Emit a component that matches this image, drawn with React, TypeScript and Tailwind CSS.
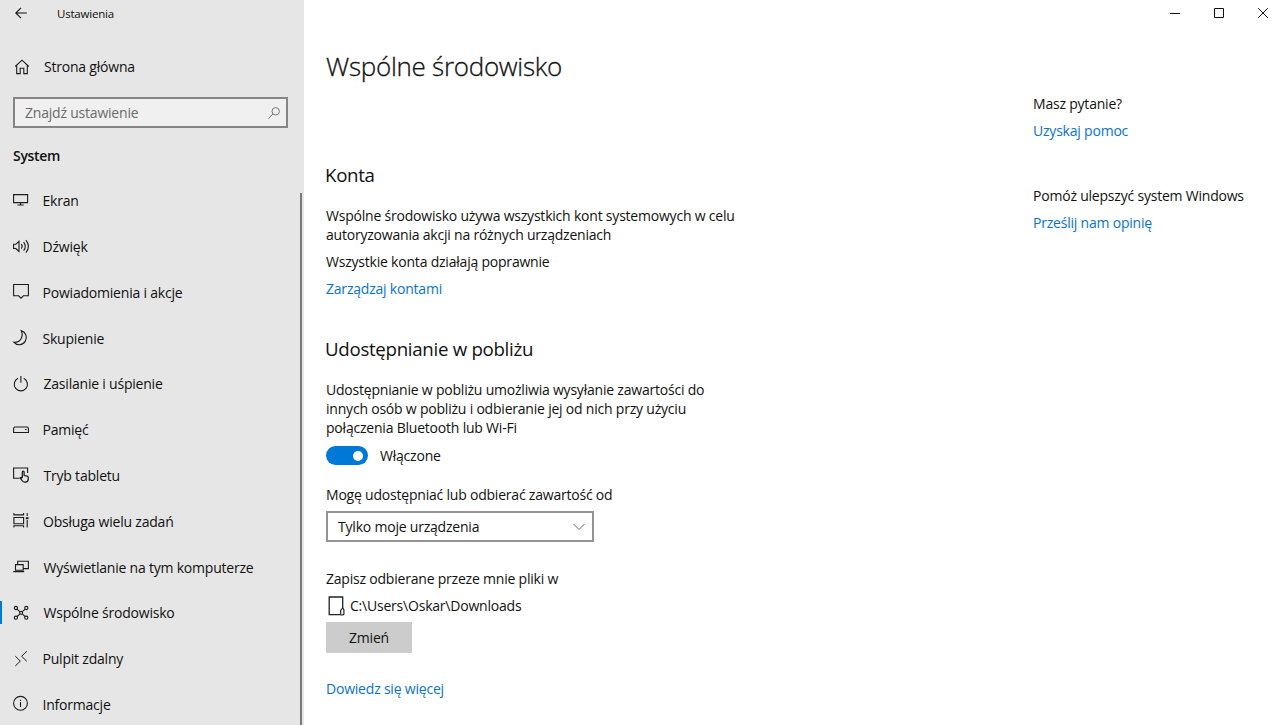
import type { ReactNode } from "react";

interface NavItem {
  label: string;
  text: string;
  icon: ReactNode;
  active?: boolean;
}

function Glyph({ children }: { children: ReactNode }) {
  return (
    <svg
      viewBox="0 0 16 16"
      className="h-4 w-4 shrink-0 overflow-visible"
      fill="none"
      stroke="#1c1c1c"
      strokeWidth="1.1"
    >
      {children}
    </svg>
  );
}

const navItems: NavItem[] = [
  {
    label: "Ekran",
    text: "pl-[13.5px]",
    icon: (
      <Glyph>
        <path d="M.6 1.6h14v8H.6zM7.6 9.6v2.3M4.5 12h6.2" />
      </Glyph>
    ),
  },
  {
    label: "Dźwięk",
    text: "pl-[13.5px]",
    icon: (
      <Glyph>
        <path d="M.6 5.3h2.2L6 2.3v10.2l-3.2-3H.6z" />
        <path d="M8.3 5.2q1.8 2.2 0 4.5M10.6 3.2q3.4 4.2 0 8.5M12.9 1.2q5.2 6.2 0 12.4" />
      </Glyph>
    ),
  },
  {
    label: "Powiadomienia i akcje",
    text: "pl-[13.5px]",
    icon: (
      <Glyph>
        <path d="M.6.5h14.8v11.3h-5L8 14.2l-2.4-2.4h-5z" />
      </Glyph>
    ),
  },
  {
    label: "Skupienie",
    text: "pl-[13.5px]",
    icon: (
      <Glyph>
        <path d="M8.2.6a7.2 7.2 0 1 1-7.5 11.6C7.7 12.8 10.8 6 8.2.6z" />
      </Glyph>
    ),
  },
  {
    label: "Zasilanie i uśpienie",
    text: "pl-[14.5px]",
    icon: (
      <Glyph>
        <path d="M5 2.3a6.6 6.6 0 1 0 5.7 0M7.9 0v6.7" />
      </Glyph>
    ),
  },
  {
    label: "Pamięć",
    text: "pl-[13.5px]",
    icon: (
      <Glyph>
        <path d="M1.6 5h12.9l.9 1.2v4.3H.6V6.2z" />
        <path d="M12 7.5h1.6" strokeWidth="1" />
      </Glyph>
    ),
  },
  {
    label: "Tryb tabletu",
    text: "pl-[14.5px]",
    icon: (
      <Glyph>
        <path d="M6.5 11.2H.6V1h14v5" />
        <path
          d="M9.3 11V5q0-1 .9-1t.9 1v3.5l3.2.7q1 .3 1 1.3v1.5q0 3-3 3h-.8q-1.6 0-2.4-1.5L7.2 11q.7-1.2 2.1.3"
          strokeWidth="1.25"
        />
      </Glyph>
    ),
  },
  {
    label: "Obsługa wielu zadań",
    text: "pl-[14px]",
    icon: (
      <Glyph>
        <path d="M.9 0v1.9h9.7V0M.9 4.5h9.7v6.2H.9zM.9 14.5v-1.7h9.7v1.7M14.2 0v3M14.2 7v7.5" />
        <path d="M12.8 5.2h2.7" strokeWidth="2" />
      </Glyph>
    ),
  },
  {
    label: "Wyświetlanie na tym komputerze",
    text: "pl-[14.5px]",
    icon: (
      <Glyph>
        <path d="M4.7 5.3V2.3h10.7v7.3h-5M2.5 5.6h7.7v5.6H2.5zM.2 12.6h11" />
      </Glyph>
    ),
  },
  {
    label: "Wspólne środowisko",
    text: "pl-[14.5px]",
    active: true,
    icon: (
      <Glyph>
        <path d="M4 4.2l2.8 2.4M12.2 4.2L9.4 6.6M4 11.5l2.8-2.4M12.2 11.5L9.4 9.1" />
        <circle cx="2.9" cy="3" r="1.6" />
        <circle cx="13.3" cy="3" r="1.6" />
        <circle cx="2.9" cy="12.7" r="1.6" />
        <circle cx="13.3" cy="12.7" r="1.6" />
        <circle cx="8.1" cy="7.85" r="1.5" />
      </Glyph>
    ),
  },
  {
    label: "Pulpit zdalny",
    text: "pl-[13.5px]",
    icon: (
      <Glyph>
        <path d="M2.3 5.2l5 4.9-5 4.9M13.8.2L8.6 5.3l5.2 5" strokeWidth="1" />
      </Glyph>
    ),
  },
  {
    label: "Informacje",
    text: "pl-[13.5px]",
    icon: (
      <Glyph>
        <circle cx="7.5" cy="7.3" r="6.9" />
        <path d="M7.5 6v5M7.5 3.7v1.3" />
      </Glyph>
    ),
  },
];

function Sidebar() {
  return (
    <aside className="flex h-full w-[304px] shrink-0 flex-col bg-[#e6e6e6]">
      <div className="flex h-7 items-center pl-[15px]">
        <svg viewBox="0 0 12 12" className="mb-0.5 h-3 w-3" fill="none" stroke="#111" strokeWidth="1.1">
          <path d="M.8 6h11M6 .9L.8 6 6 11.1" />
        </svg>
        <span className="pb-px pl-[30px] text-[11.5px]">Ustawienia</span>
      </div>
      <div className="mt-[29px] flex h-5 items-center pl-[14px]">
        <Glyph>
          <path d="M1.2 7.5L8 1.2l6.8 6.3M2.7 6.3v8.3h3.5V9.3h3.6v5.3h3.5V6.3" />
        </Glyph>
        <span className="pb-px pl-[14px]">Strona główna</span>
      </div>
      <div className="mt-5 ml-[13px] flex h-[31px] w-[275px] items-center justify-between border-2 border-[#858585] bg-[#f0f0f0] pr-[6px] pl-[10px] text-[#6b6b6b]">
        <span className="pb-px">Znajdź ustawienie</span>
        <svg viewBox="0 0 12 12" className="h-3 w-3" fill="none" stroke="#777" strokeWidth="1">
          <circle cx="7.7" cy="4.3" r="3.7" />
          <path d="M5 7L.4 11.6" />
        </svg>
      </div>
      <h2 className="mt-[18px] pl-[13px] font-semibold tracking-[-0.3px]">System</h2>
      <div className="mt-[13px] flex min-h-0 flex-1">
        <nav className="flex w-[300px] flex-col overflow-hidden">
          {navItems.map((item) => (
            <div key={item.label} className="flex h-[45.77px] shrink-0 items-center">
              <span className={item.active ? "h-[23px] w-[2px] bg-[#0078d7]" : "w-[2px]"} />
              <span className="pl-[11px]">{item.icon}</span>
              <span className={item.text}>{item.label}</span>
            </div>
          ))}
        </nav>
        <div className="mt-[15px] w-[2px] bg-[#7a7a7a]" />
      </div>
    </aside>
  );
}

function WindowButtons() {
  return (
    <div className="flex h-7 justify-end gap-[34px] pt-2 pr-3">
      <svg viewBox="0 0 10 10" className="h-2.5 w-2.5" stroke="#111">
        <path d="M0 5.5h10" />
      </svg>
      <svg viewBox="0 0 10 10" className="h-2.5 w-2.5" fill="none" stroke="#111">
        <path d="M.5.5h9v9h-9z" />
      </svg>
      <svg viewBox="0 0 10 10" className="h-2.5 w-2.5" stroke="#111">
        <path d="M.2.2l9.6 9.6M9.8.2L.2 9.8" />
      </svg>
    </div>
  );
}

function Content() {
  return (
    <main className="w-[480px] pl-[22px]">
      <h1 className="mt-[21px] text-[26px] leading-[34px] font-light tracking-[-0.28px] [-webkit-text-stroke:0.3px_#111]">
        Wspólne środowisko
      </h1>

      <h2 className="mt-20 -ml-px text-[18.7px] leading-6 tracking-[-0.3px]">Konta</h2>
      <p className="mt-[19px]">
        Wspólne środowisko używa wszystkich kont systemowych w celu
        <br />
        autoryzowania akcji na różnych urządzeniach
      </p>
      <p className="mt-2">Wszystkie konta działają poprawnie</p>
      <p className="mt-2 text-[#0873cd]">Zarządzaj kontami</p>

      <h2 className="mt-[39px] -ml-px text-[18.7px] leading-6 tracking-[-0.3px]">Udostępnianie w pobliżu</h2>
      <p className="mt-[19px]">
        Udostępnianie w pobliżu umożliwia wysyłanie zawartości do
        <br />
        innych osób w pobliżu i odbieranie jej od nich przy użyciu
        <br />
        połączenia Bluetooth lub Wi-Fi
      </p>
      <div className="mt-[9px] flex h-[19px] items-center">
        <span className="flex h-[19px] w-[42px] items-center justify-end rounded-full bg-[#0078d7] pr-[5px]">
          <span className="h-[10px] w-[10px] rounded-full bg-white" />
        </span>
        <span className="pl-3">Włączone</span>
      </div>

      <p className="mt-5">Mogę udostępniać lub odbierać zawartość od</p>
      <div className="mt-[7px] flex h-[31px] w-[268px] items-center justify-between border-2 border-[#949494] pr-[7px] pl-[10px]">
        <span className="pb-px">Tylko moje urządzenia</span>
        <svg viewBox="0 0 12 8" className="h-2 w-3" fill="none" stroke="#666" strokeWidth="1">
          <path d="M.5 1l5.5 5.5L11.5 1" />
        </svg>
      </div>

      <p className="mt-[27px]">Zapisz odbierane przeze mnie pliki w</p>
      <div className="mt-2 flex h-[19px] items-center">
        <svg viewBox="0 0 18 20" className="ml-[2px] h-5 w-[18px]" fill="none" stroke="#222" strokeWidth="1.3">
          <path d="M12.3 18.7H1.2V1h13.5v11.5" />
          <path d="M12.7 18.7v-4.5l2-2 1.2 1.5v4.5q-1.5 1.3-3.2.5z" strokeWidth="1.2" />
        </svg>
        <span className="pb-px pl-1">C:\Users\Oskar\Downloads</span>
      </div>
      <button className="mt-[7px] block h-[31px] w-[86px] bg-[#cccccc]">Zmień</button>
      <p className="mt-[26px] text-[#0873cd]">Dowiedz się więcej</p>
    </main>
  );
}

function HelpPanel() {
  return (
    <section className="w-[247px] shrink-0 pt-[66px]">
      <p>Masz pytanie?</p>
      <p className="mt-2 text-[#0873cd]">Uzyskaj pomoc</p>
      <p className="mt-[46px]">Pomóż ulepszyć system Windows</p>
      <p className="mt-2 text-[#0873cd]">Prześlij nam opinię</p>
    </section>
  );
}

export default function App() {
  return (
    <div className="flex h-[725px] w-[1280px] overflow-hidden bg-white font-['Open_Sans','Noto_Sans',sans-serif] text-[14px] leading-[19px] tracking-[-0.21px] whitespace-nowrap text-[#111]">
      <Sidebar />
      <div className="flex min-w-0 flex-1 flex-col">
        <WindowButtons />
        <div className="flex justify-between">
          <Content />
          <HelpPanel />
        </div>
      </div>
    </div>
  );
}
